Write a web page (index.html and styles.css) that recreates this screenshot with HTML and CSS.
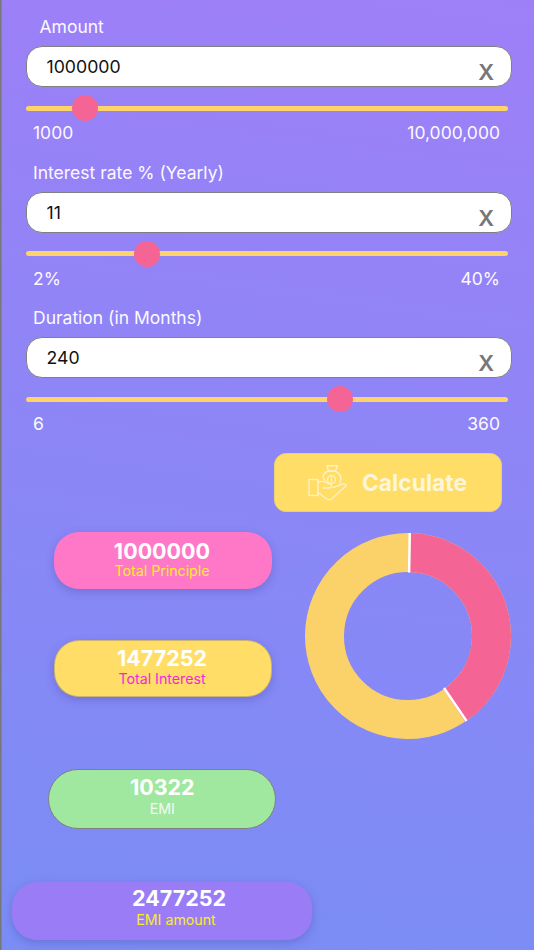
FILE: index.html
```html
<!DOCTYPE html>
<html lang="en">
<head>
    <meta charset="UTF-8">
    <meta name="viewport" content="width=device-width, initial-scale=1.0">
    <title>EMI Calculator</title>
    <link rel="stylesheet" href="styles.css">
</head>
<body>

    <!-- Loan inputs -->
    <section class="field">
        <label class="field-label field-label-first">Amount</label>
        <div class="input-wrap">
            <input class="text-input" type="text" value="1000000">
            <span class="clear-btn">X</span>
        </div>
        <input class="slider" type="range" min="1000" max="10000000" value="1000000">
        <div class="range-row"><span>1000</span><span>10,000,000</span></div>
    </section>

    <section class="field">
        <label class="field-label">Interest rate % (Yearly)</label>
        <div class="input-wrap">
            <input class="text-input" type="text" value="11">
            <span class="clear-btn">X</span>
        </div>
        <input class="slider" type="range" min="2" max="40" value="11">
        <div class="range-row"><span>2%</span><span>40%</span></div>
    </section>

    <section class="field">
        <label class="field-label">Duration (in Months)</label>
        <div class="input-wrap">
            <input class="text-input" type="text" value="240">
            <span class="clear-btn">X</span>
        </div>
        <input class="slider" type="range" min="6" max="360" value="240">
        <div class="range-row"><span>6</span><span>360</span></div>
    </section>

    <div class="calc-row">
        <button class="calc-btn">
            <svg class="calc-icon" viewBox="0 0 39 36" fill="none" stroke="#fff" stroke-width="1.4" stroke-linejoin="round" stroke-linecap="round">
                <path d="M1 14.500h9v16H1z"/>
                <path d="M10 17.500c3-1.500 5-1.500 7-.5l5 2c2.500 1 2 4-1 4h-6"/>
                <path d="M10 27.500l9 6.500c1.500 1 3 1 4.500 0L38 21c.5-1.500-1-2.500-3-2L25 22.500"/>
                <path d="M17 15.500c-3.500-3-2-7 3-9.500h7c5 2.500 7.500 6 5 12"/>
                <path d="M19 .8h10.500L27.500 6h-7z"/>
                <circle cx="23.500" cy="14.500" r="4"/>
                <path d="M23.500 12.500v4"/>
            </svg>
            <span>Calculate</span>
        </button>
    </div>

    <!-- Results -->
    <div class="results">
        <div class="pill-col">
            <div class="pill pill-pink">
                <b>1000000</b>
                <span class="pill-sub sub-yellow">Total Principle</span>
            </div>
            <div class="pill pill-yellow">
                <b>1477252</b>
                <span class="pill-sub sub-magenta">Total Interest</span>
            </div>
        </div>
        <svg class="donut" viewBox="0 0 208 208" fill="none" stroke-width="39">
            <g transform="rotate(-89 104 104)">
                <circle cx="104" cy="104" r="83.500" stroke="#fbd26a"/>
                <circle cx="104" cy="104" r="83.500" stroke="#f46596" pathLength="360" stroke-dasharray="145.300 214.700"/>
            </g>
            <path d="M105.800 1L105.100 40.500" stroke="#fff" stroke-width="2.500"/>
            <path d="M162.500 189L140 156" stroke="#fff" stroke-width="2.500"/>
        </svg>
    </div>

    <div class="pill pill-green">
        <b>10322</b>
        <span class="pill-sub sub-white">EMI</span>
    </div>

    <div class="pill pill-purple">
        <b>2477252</b>
        <span class="pill-sub sub-yellow">EMI amount</span>
    </div>

</body>
</html>
```

FILE: styles.css
```css
/* General Styling */
html, body {
    height: 100%;
}

body {
    font-family: Inter, "Noto Sans", sans-serif;
    background: linear-gradient(188deg, #9e7ff8 0%, #7a8df5 100%);
    box-shadow: inset 1.500px 0 0 #777;
    margin: 0;
    padding: 0;
    color: #fff;
    overflow: hidden;
}

/* Input sections */
.field {
    height: 145.600px;
    padding-left: 26px;
    box-sizing: border-box;
    padding-top: 16px;
}

.field-label {
    display: block;
    font-size: 17.500px;
    line-height: 21px;
    margin-left: 7px;
    color: #fbf9ff;
}

.field-label-first {
    margin-left: 13.500px;
}

.input-wrap {
    position: relative;
    width: 486px;
    margin-top: 9px;
}

.text-input {
    display: block;
    width: 100%;
    height: 41px;
    box-sizing: border-box;
    border: 1px solid #808080;
    border-radius: 16px;
    background: #fff;
    padding: 0 0 0 19.500px;
    font-family: inherit;
    font-size: 17.700px;
    color: #111;
    outline: none;
}

.clear-btn {
    position: absolute;
    right: 18px;
    top: 12px;
    font-size: 22px;
    font-weight: 600;
    line-height: 28px;
    color: #777;
}

/* Sliders */
.slider {
    display: block;
    -webkit-appearance: none;
    appearance: none;
    width: 482px;
    height: 26px;
    margin: 8px 0 0;
    background: transparent;
}

.slider::-webkit-slider-runnable-track {
    height: 5px;
    border-radius: 3px;
    background: #fdd36a;
}

.slider::-webkit-slider-thumb {
    -webkit-appearance: none;
    width: 26px;
    height: 26px;
    margin-top: -10.500px;
    border-radius: 50%;
    background: #f46596;
}

.range-row {
    display: flex;
    justify-content: space-between;
    width: 467px;
    margin: 1px 0 0 7px;
    font-size: 17.500px;
    line-height: 21px;
    color: #fbf9ff;
}

/* Calculate button */
.calc-row {
    display: flex;
    justify-content: flex-end;
    padding: 16.500px 32px 0 0;
}

.calc-btn {
    display: flex;
    align-items: center;
    gap: 15px;
    width: 228px;
    height: 58.500px;
    box-sizing: border-box;
    padding: 0 0 0 33px;
    border: 1px solid #e9cf77;
    border-radius: 12px;
    background: #ffdd66;
    color: #fdf6dc;
    font-family: inherit;
    font-size: 22.800px;
    font-weight: 700;
}

.calc-icon {
    width: 39px;
    height: 36px;
    opacity: 0.6;
}

/* Results */
.results {
    display: flex;
    justify-content: space-between;
    padding: 20px 22px 0 54px;
}

.pill-col {
    display: flex;
    flex-direction: column;
    gap: 50.500px;
}

.donut {
    display: block;
    width: 208px;
    height: 208px;
}

.pill {
    display: flex;
    flex-direction: column;
    align-items: center;
    justify-content: center;
    width: 218px;
    height: 57.300px;
    box-sizing: border-box;
    padding: 0 2px 3px 0;
    border-radius: 25px;
    box-shadow: 0 3px 8px rgba(70, 60, 150, 0.3);
}

.pill b {
    font-size: 21.500px;
    line-height: 24px;
    font-weight: 700;
}

.pill-sub {
    font-size: 14.200px;
    line-height: 16px;
}

.pill-pink {
    background: #ff78c8;
}

.pill-yellow {
    background: #ffdd66;
    border: 1px solid rgba(130, 120, 130, 0.4);
}

.pill-yellow b {
    margin-bottom: 1px;
}

.pill-green {
    width: 228px;
    height: 60.500px;
    margin: 29.200px 0 0 48.300px;
    padding: 0 0 6px;
    border: 1px solid #808080;
    border-radius: 30px;
    background: #a0e7a0;
    box-shadow: none;
}

.pill-green .pill-sub,
.pill-purple .pill-sub {
    margin-top: 2px;
}

.pill-purple {
    width: 300px;
    height: 57.700px;
    margin: 52.800px 0 0 12px;
    padding: 0 0 9px 34px;
    background: #9a7df6;
}

.pill-purple .pill-sub {
    margin-right: 6px;
}

.sub-yellow {
    color: #fbec28;
}

.sub-magenta {
    color: #f02cd8;
}

.sub-white {
    color: #f2fbf2;
}
```
